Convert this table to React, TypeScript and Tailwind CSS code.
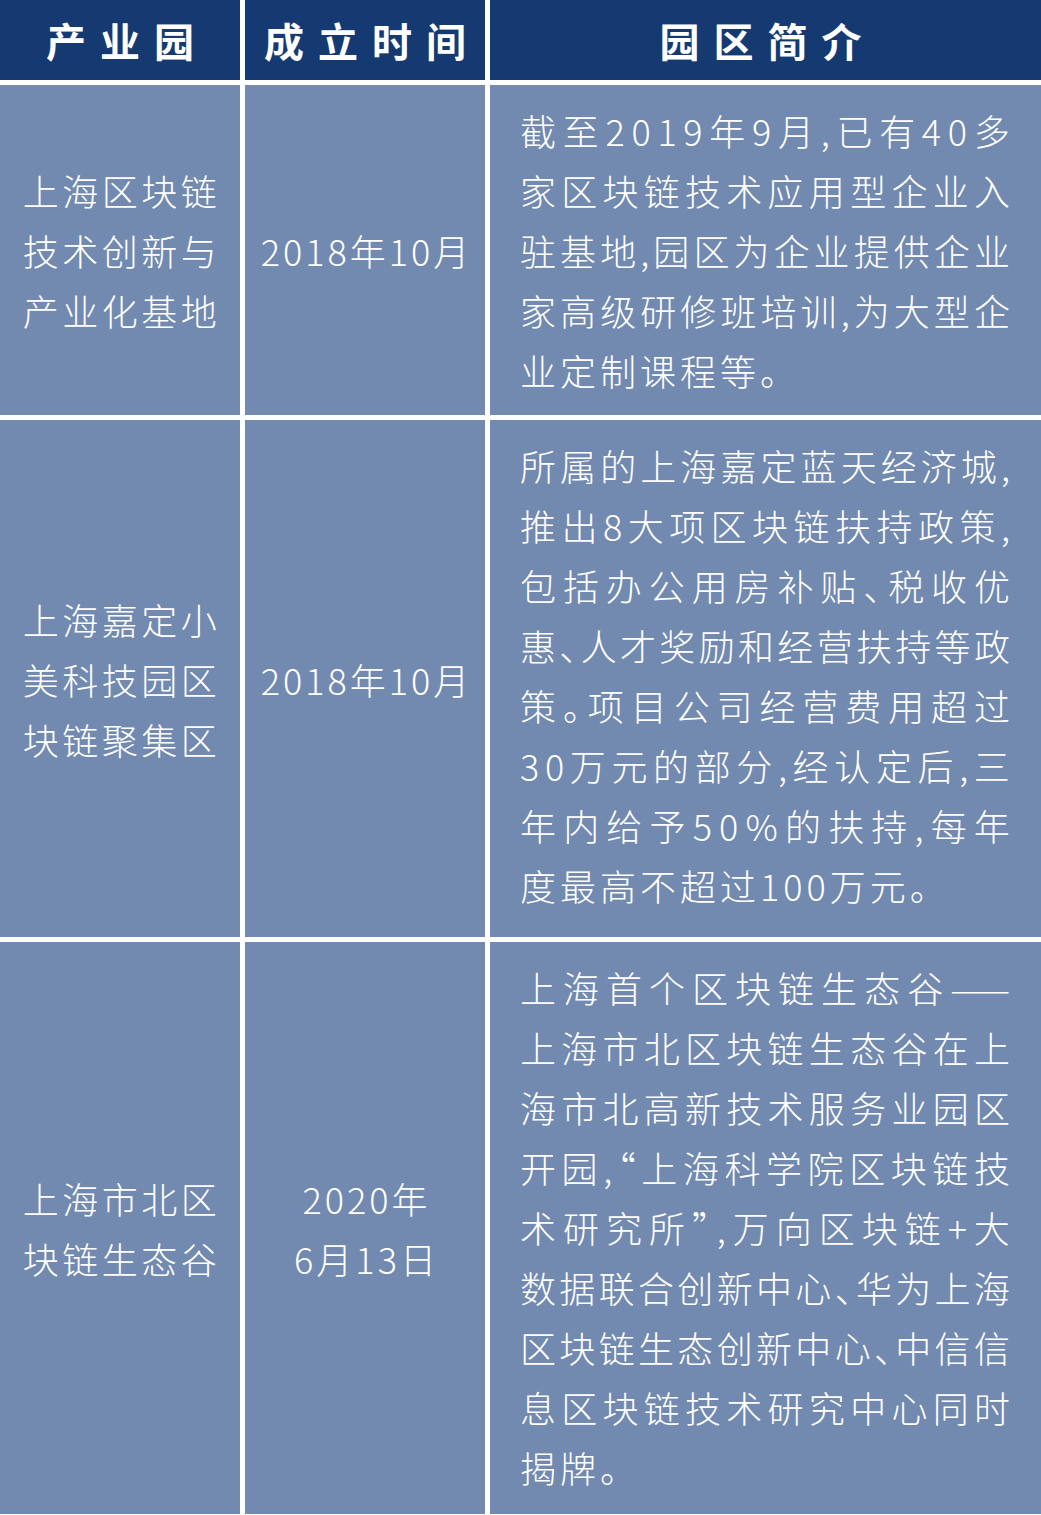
import React from 'react';

const rows = [
  {
    park: ['上海区块链', '技术创新与', '产业化基地'],
    date: ['2018年10月'],
    height: 'h-[330px]',
    intro: [
      '截至2019年9月,已有40多',
      '家区块链技术应用型企业入',
      '驻基地,园区为企业提供企业',
      '家高级研修班培训,为大型企',
      '业定制课程等。',
    ],
  },
  {
    park: ['上海嘉定小', '美科技园区', '块链聚集区'],
    date: ['2018年10月'],
    height: 'h-[517px]',
    intro: [
      '所属的上海嘉定蓝天经济城,',
      '推出8大项区块链扶持政策,',
      '包括办公用房补贴、税收优',
      '惠、人才奖励和经营扶持等政',
      '策。项目公司经营费用超过',
      '30万元的部分,经认定后,三',
      '年内给予50%的扶持,每年',
      '度最高不超过100万元。',
    ],
  },
  {
    park: ['上海市北区', '块链生态谷'],
    date: ['2020年', '6月13日'],
    height: 'h-[572px]',
    intro: [
      '上海首个区块链生态谷——',
      '上海市北区块链生态谷在上',
      '海市北高新技术服务业园区',
      '开园,“上海科学院区块链技',
      '术研究所”,万向区块链+大',
      '数据联合创新中心、华为上海',
      '区块链生态创新中心、中信信',
      '息区块链技术研究中心同时',
      '揭牌。',
    ],
  },
];

// split a line into glyphs, keeping the double dash together
function glyphs(line: string) {
  return line.match(/——|./gu) ?? [];
}

function HeaderCell({ children, className = '' }: { children: React.ReactNode; className?: string }) {
  return (
    <div
      className={`flex h-[80px] items-center justify-center bg-[#143a71] text-[40px] font-bold leading-none tracking-[14px] text-white ${className}`}
    >
      {children}
    </div>
  );
}

export default function App() {
  return (
    <div className="w-[1041px] bg-white font-['Noto_Sans_CJK_SC',sans-serif] text-white">
      <div className="grid grid-cols-[240px_240px_1fr] gap-[5px] pb-px">
        <HeaderCell className="pl-[14px]">产业园</HeaderCell>
        <HeaderCell className="pl-[14px]">成立时间</HeaderCell>
        <HeaderCell className="pl-[4px]">园区简介</HeaderCell>

        {rows.map((row, i) => (
          <React.Fragment key={i}>
            <div
              className={`${row.height} flex flex-col items-center justify-center bg-[#728aaf] pl-[3px] text-[36px] font-light leading-[60px] tracking-[3.5px]`}
            >
              {row.park.map((line) => (
                <div key={line}>{line}</div>
              ))}
            </div>
            <div
              className={`${row.height} flex flex-col items-center justify-center bg-[#728aaf] pl-[3px] text-[36px] font-light leading-[60px] tracking-[3px]`}
            >
              {row.date.map((line) => (
                <div key={line}>{line}</div>
              ))}
            </div>
            <div
              className={`${row.height} bg-[#728aaf] pl-[30px] pr-[31px] pt-[15px] text-[36px] font-light leading-[60px] [font-feature-settings:'halt']`}
            >
              {row.intro.map((line, j) =>
                j < row.intro.length - 1 ? (
                  <div key={j} className="flex justify-between whitespace-nowrap">
                    {glyphs(line).map((g, k) => (
                      <span key={k}>{g}</span>
                    ))}
                  </div>
                ) : (
                  <div key={j} className="whitespace-nowrap tracking-[4px]">
                    {line}
                  </div>
                ),
              )}
            </div>
          </React.Fragment>
        ))}
      </div>
    </div>
  );
}
